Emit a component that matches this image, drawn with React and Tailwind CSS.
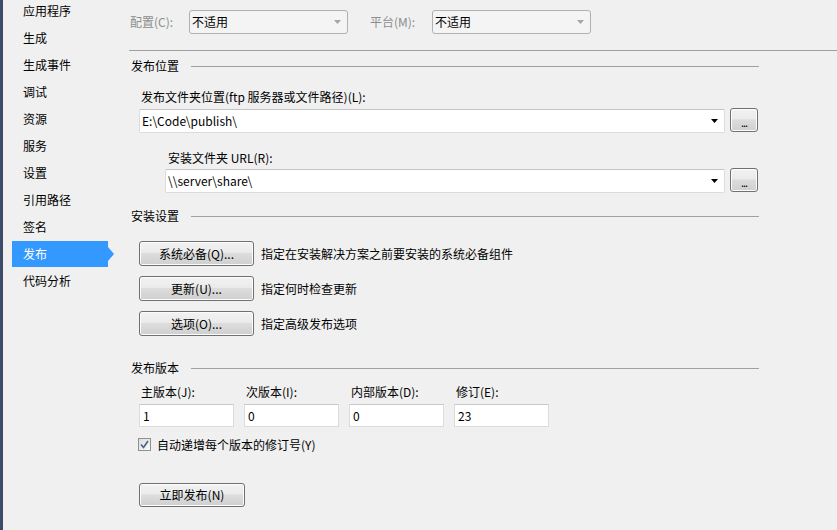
const navItems = [
  "应用程序",
  "生成",
  "生成事件",
  "调试",
  "资源",
  "服务",
  "设置",
  "引用路径",
  "签名",
  "发布",
  "代码分析",
];

const Arrow = ({ color = "#000" }) => (
  <svg width="7" height="4" viewBox="0 0 7 4">
    <path d="M0 0h7L3.5 4z" fill={color} />
  </svg>
);

const SectionHeader = ({ title }) => (
  <div className="flex items-center h-[16px]">
    <span className="pl-[2px] w-[62px] shrink-0">{title}</span>
    <div className="flex-1 h-px bg-[#a0a0a0]" />
  </div>
);

const WinButton = ({ children, className = "" }) => (
  <button
    className={`relative rounded-[3px] border border-[#707070] bg-[linear-gradient(#f2f2f2_0%,#ebebeb_45%,#dddddd_50%,#cfcfcf_100%)] shadow-[inset_0_0_0_1px_#fcfcfc] text-black leading-none flex items-center justify-center ${className}`}
  >
    {children}
  </button>
);

const ComboInput = ({ value, width }) => (
  <div
    className={`${width} h-[24px] bg-white border border-[#dcdcdc] border-t-[#c4c4c4] rounded-[2px] flex items-center pl-[2px] pr-[6px]`}
  >
    <span className="flex-1">{value}</span>
    <Arrow />
  </div>
);

const DisabledSelect = () => (
  <div className="w-[159px] h-[24px] bg-[#f4f4f4] border border-[#adb2b5] rounded-[3px] flex items-center pl-[2px] pr-[6px]">
    <span className="flex-1 text-black">不适用</span>
    <Arrow color="#a6a6a6" />
  </div>
);

const VersionField = ({ label, value }) => (
  <div className="w-[95px] flex flex-col">
    <span className="pl-[2px] h-[16px]">{label}</span>
    <div className="mt-[4px] h-[23px] bg-white border border-[#dcdcdc] border-t-[#c8c8c8] flex items-center pl-[3px]">
      {value}
    </div>
  </div>
);

export default function App() {
  return (
    <div
      className="flex w-[837px] h-[530px] overflow-hidden bg-[#f0f0f0] text-[12px] leading-[16px] text-black"
      style={{ fontFamily: '"Noto Sans CJK SC", "Noto Sans", sans-serif' }}
    >
      <div className="w-[3px] shrink-0 bg-[#3d4b6b]" />

      {/* sidebar */}
      <div className="w-[126px] shrink-0 flex flex-col -mt-[3px]">
        {navItems.map((item) =>
          item === "发布" ? (
            <div key={item} className="h-[27px] flex items-center">
              <div className="ml-[9px] w-[96px] h-[26px] bg-[#3399ff] text-white flex items-center pl-[11px]">
                {item}
              </div>
              <div className="w-0 h-0 border-y-[7px] border-y-transparent border-l-[6px] border-l-[#3399ff]" />
            </div>
          ) : (
            <div key={item} className="h-[27px] flex items-center pl-[20px]">
              {item}
            </div>
          )
        )}
      </div>

      {/* main */}
      <div className="flex-1 flex flex-col">
        <div className="mt-[10px] h-[24px] flex items-center">
          <span className="w-[60px] pl-[1px] text-[#8d8d8d]">配置(C):</span>
          <DisabledSelect />
          <span className="ml-[22px] w-[62px] text-[#8d8d8d]">平台(M):</span>
          <DisabledSelect />
        </div>

        <div className="mt-[16px] h-px bg-[#a0a0a0]" />

        <div className="w-[630px] flex flex-col">
          <div className="mt-[7px]">
            <SectionHeader title="发布位置" />
          </div>

          <span className="mt-[15px] pl-[12px] h-[16px]">
            发布文件夹位置(ftp 服务器或文件路径)(L):
          </span>
          <div className="mt-[4px] pl-[10px] flex items-start">
            <ComboInput value="E:\Code\publish\" width="w-[586px]" />
            <WinButton className="ml-[5px] -mt-px w-[28px] h-[24px] text-[11px] pb-[2px]">
              <span className="mt-[6px] tracking-[-1px]">...</span>
            </WinButton>
          </div>

          <span className="mt-[17px] pl-[39px] h-[16px]">安装文件夹 URL(R):</span>
          <div className="mt-[3px] pl-[36px] flex items-start">
            <ComboInput value="\\server\share\" width="w-[560px]" />
            <WinButton className="ml-[5px] -mt-px w-[28px] h-[24px] text-[11px] pb-[2px]">
              <span className="mt-[6px] tracking-[-1px]">...</span>
            </WinButton>
          </div>

          <div className="mt-[15px]">
            <SectionHeader title="安装设置" />
          </div>

          <div className="mt-[17px] pl-[10px] flex flex-col gap-[10px]">
            {[
              ["系统必备(Q)...", "指定在安装解决方案之前要安装的系统必备组件"],
              ["更新(U)...", "指定何时检查更新"],
              ["选项(O)...", "指定高级发布选项"],
            ].map(([btn, desc]) => (
              <div key={btn} className="flex items-center">
                <WinButton className="w-[115px] h-[25px]">{btn}</WinButton>
                <span className="ml-[7px]">{desc}</span>
              </div>
            ))}
          </div>

          <div className="mt-[24px]">
            <SectionHeader title="发布版本" />
          </div>

          <div className="mt-[8px] pl-[10px] flex gap-[10px]">
            <VersionField label="主版本(J):" value="1" />
            <VersionField label="次版本(I):" value="0" />
            <VersionField label="内部版本(D):" value="0" />
            <VersionField label="修订(E):" value="23" />
          </div>

          <div className="mt-[11px] pl-[9px] flex items-center h-[13px]">
            <div className="w-[13px] h-[13px] border border-[#8e8f8f] bg-[linear-gradient(135deg,#dcdcdc,#fbfbfb)] flex items-center justify-center">
              <svg width="9" height="9" viewBox="0 0 9 9">
                <path
                  d="M1 4.5 L3.5 7.5 L8 1"
                  fill="none"
                  stroke="#4a5f86"
                  strokeWidth="1.6"
                />
              </svg>
            </div>
            <span className="ml-[6px]">自动递增每个版本的修订号(Y)</span>
          </div>

          <div className="mt-[32px] pl-[10px]">
            <WinButton className="w-[106px] h-[24px]">立即发布(N)</WinButton>
          </div>
        </div>
      </div>
    </div>
  );
}
